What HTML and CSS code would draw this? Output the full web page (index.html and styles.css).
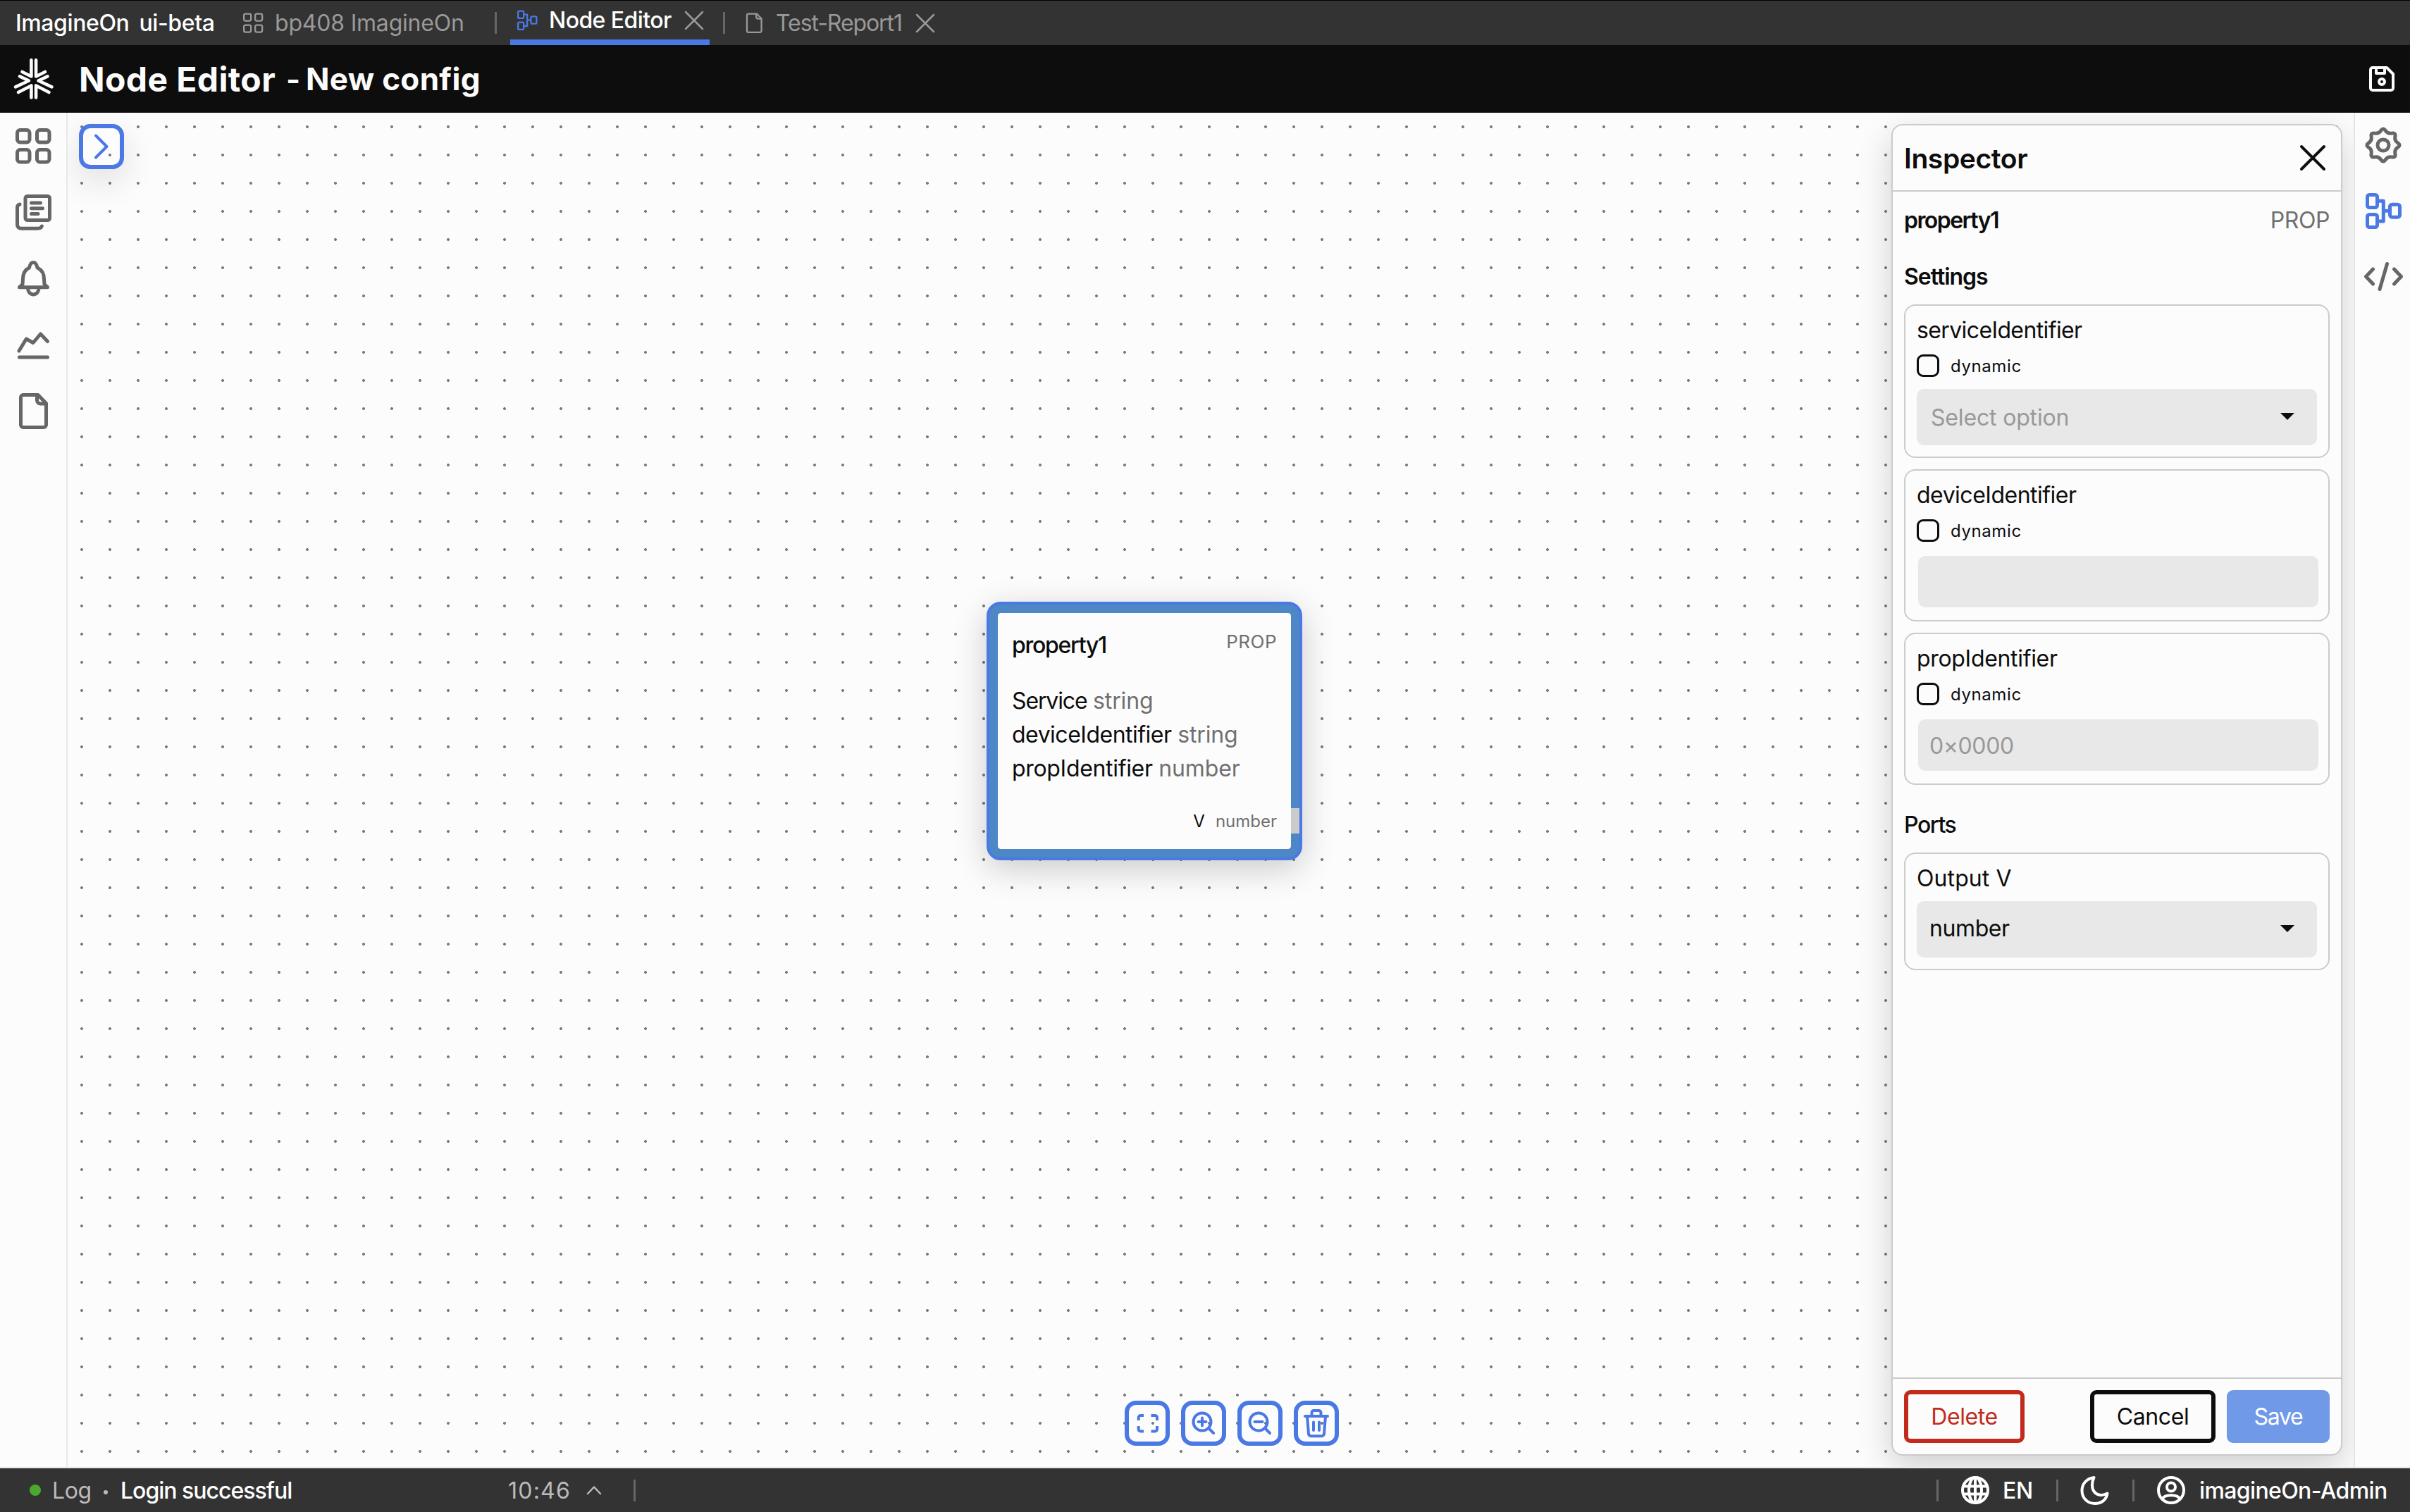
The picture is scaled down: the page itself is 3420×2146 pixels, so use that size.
FILE: index.html
```html
<!DOCTYPE html>
<html lang="en">
<head>
  <meta charset="UTF-8" />
  <meta name="viewport" content="width=device-width, initial-scale=1" />
  <title>ImagineOn - Node Editor</title>
  <link rel="stylesheet" href="styles.css">
</head>
<body>

  <svg class="symbols" aria-hidden="true">
    <symbol id="i-grid" viewBox="0 0 56 56">
      <rect x="5.5" y="4.5" width="17.5" height="17.5" rx="4" />
      <rect x="33.5" y="4.5" width="17.5" height="17.5" rx="4" />
      <rect x="5.5" y="32.5" width="17.5" height="17.5" rx="4" />
      <rect x="33.5" y="32.5" width="17.5" height="17.5" rx="4" />
    </symbol>
    <symbol id="i-nodes" viewBox="0 0 56 56">
      <rect x="5.5" y="4.5" width="14" height="18" rx="3" />
      <rect x="5.5" y="32.5" width="14" height="18" rx="3" />
      <rect x="37.5" y="18.2" width="14" height="18" rx="3" />
      <path d="M20 13.3h8.3V42H20M28.3 27.3h9" />
    </symbol>
    <symbol id="i-file" viewBox="0 0 56 56">
      <path d="M14 4.5h21L46.5 16.5v30.5a3.5 3.5 0 0 1-3.5 3.5H14a3.5 3.5 0 0 1-3.5-3.5V8a3.5 3.5 0 0 1 3.5-3.5z" />
      <path d="M33.5 5.5v6.5a5 5 0 0 0 5 5h7.5" />
    </symbol>
    <symbol id="i-close" viewBox="0 0 32 32">
      <path d="M4 4L28 28M28 4L4 28" />
    </symbol>
  </svg>

  <nav class="topbar">
    <div class="brand">
      <span class="brand-name">ImagineOn</span>
      <span class="brand-env">ui-beta</span>
    </div>
    <div class="tab tab-project">
      <svg class="icon tab-icon"><use href="#i-grid" /></svg>
      <span class="tab-label">bp408 ImagineOn</span>
    </div>
    <span class="sep"></span>
    <div class="tab tab-active">
      <svg class="icon tab-icon"><use href="#i-nodes" /></svg>
      <span class="tab-label">Node Editor</span>
      <svg class="icon tab-close"><use href="#i-close" /></svg>
    </div>
    <span class="sep sep-tab"></span>
    <div class="tab tab-report">
      <svg class="icon tab-icon"><use href="#i-file" /></svg>
      <span class="tab-label">Test-Report1</span>
      <svg class="icon tab-close"><use href="#i-close" /></svg>
    </div>
  </nav>

  <header class="header">
    <svg class="icon logo" viewBox="0 0 64 64">
      <g id="logo-half">
        <path d="M28.4 5.2V28.5L15.5 22" />
        <path d="M12 28.3L25 34.5L6 43.3" />
        <path d="M10 51L28.4 41.5V58.5" />
      </g>
      <use href="#logo-half" transform="translate(63.5 0) scale(-1 1)" />
    </svg>
    <h1 class="title">Node Editor</h1>
    <span class="title-dash">-</span>
    <h2 class="subtitle">New config</h2>
    <svg class="icon header-save" viewBox="0 0 40 40">
      <path d="M7 4H27L36 13V33a3 3 0 0 1-3 3H7a3 3 0 0 1-3-3V7a3 3 0 0 1 3-3z" />
      <path d="M12 4v8h12V4" />
      <circle cx="20" cy="24" r="4" />
    </svg>
  </header>

  <main class="workspace">
    <aside class="rail rail-left">
      <svg class="icon"><use href="#i-grid" /></svg>
      <svg class="icon" viewBox="0 0 56 56">
        <rect x="17" y="4.5" width="34.5" height="34" rx="3" />
        <path d="M25.5 14H38.5M25.5 21.7H41.5M25.5 29.5H35" />
        <path d="M9 16C6.5 16.5 5.5 18 5.5 21V45a5.3 5.3 0 0 0 5.3 5.3H34C37.5 50.3 39.8 49 40.3 47" />
      </svg>
      <svg class="icon" viewBox="0 0 56 56">
        <path d="M8.5 39.7L13 35.5L13.5 28C13.5 19.5 17 14.5 22.5 12C23.5 7 25.5 4.5 28.3 4.5S33 7 34 12C39.5 14.5 43.5 19.5 43.5 28L44 35.5L48.5 39.7Z" />
        <path d="M20.5 41a7.8 9 0 0 0 15.6 0" />
      </svg>
      <svg class="icon" viewBox="0 0 56 56">
        <path d="M8 36L18.3 19L28 24.5L38.5 12L48.5 22.5M8.5 45H48.5" />
      </svg>
      <svg class="icon"><use href="#i-file" /></svg>
    </aside>

    <section class="canvas">
      <button class="tool expand">
        <svg class="icon expand-icon" viewBox="0 0 52 52"><path d="M18 10.5L33.5 26L18 41.5" /></svg>
      </button>

      <article class="node">
        <div class="node-frame">
          <div class="node-head">
            <span class="node-name">property1</span>
            <span class="node-type">PROP</span>
          </div>
          <ul class="node-fields">
            <li><span class="f-service">Service</span> <em>string</em></li>
            <li><span class="f-device">deviceIdentifier</span> <em>string</em></li>
            <li><span class="f-prop">propIdentifier</span> <em>number</em></li>
          </ul>
          <div class="node-port">
            <span>V</span><em>number</em>
            <i class="port"></i>
          </div>
        </div>
      </article>

      <div class="toolbar">
        <button class="tool">
          <svg class="icon" viewBox="0 0 52 52"><path class="flat" d="M13.7 22v-4a3 3 0 0 1 3-3h4.3M31.5 15h5.5a3 3 0 0 1 3 3v4M40 30v4.5a3 3 0 0 1-3 3h-5.5M21 37.5h-4.3a3 3 0 0 1-3-3V30" /></svg>
        </button>
        <button class="tool">
          <svg class="icon" viewBox="0 0 52 52"><circle cx="24" cy="24" r="12.5" /><path d="M33.5 33.5L40 40M18.5 24h11M24 18.5v11" /></svg>
        </button>
        <button class="tool">
          <svg class="icon" viewBox="0 0 52 52"><circle cx="24" cy="24" r="12.5" /><path d="M33.5 33.5L40 40M18.5 24h11" /></svg>
        </button>
        <button class="tool">
          <svg class="icon" viewBox="0 0 52 52"><path d="M10 16H42M19.5 15.5V11a3 3 0 0 1 3-3h7a3 3 0 0 1 3 3v4.5M13 16L15 41a3.5 3.5 0 0 0 3.5 3.2h15A3.5 3.5 0 0 0 37 41L39 16M22 24.5V36M30 24.5V36" /></svg>
        </button>
      </div>

      <aside class="inspector">
        <div class="inspector-head">
          <span class="inspector-title">Inspector</span>
          <svg class="icon inspector-close" viewBox="0 0 40 40"><path d="M4 4L36 36M36 4L4 36" /></svg>
        </div>

        <div class="inspector-body">
          <div class="row">
            <span class="prop-name">property1</span>
            <span class="prop-type">PROP</span>
          </div>
          <h3 class="section section-settings">Settings</h3>
          <div class="cards">
            <div class="card">
              <span class="card-label l-service">serviceIdentifier</span>
              <label class="check"><input type="checkbox"><span>dynamic</span></label>
              <div class="select empty">Select option<i class="arrow"></i></div>
            </div>
            <div class="card">
              <span class="card-label">deviceIdentifier</span>
              <label class="check"><input type="checkbox"><span>dynamic</span></label>
              <input class="field" type="text">
            </div>
            <div class="card">
              <span class="card-label l-prop">propIdentifier</span>
              <label class="check"><input type="checkbox"><span>dynamic</span></label>
              <input class="field" type="text" placeholder="0×0000">
            </div>
          </div>
          <h3 class="section section-ports">Ports</h3>
          <div class="card">
            <span class="card-label l-output">Output V</span>
            <div class="select output">number<i class="arrow"></i></div>
          </div>
        </div>

        <div class="inspector-foot">
          <button class="btn btn-delete">Delete</button>
          <button class="btn btn-cancel">Cancel</button>
          <button class="btn btn-save">Save</button>
        </div>
      </aside>
    </section>

    <aside class="rail rail-right">
      <svg class="icon" viewBox="0 0 56 56">
        <path d="M48.6 24.8Q53.5 28 48.6 31.2Q43.7 34.5 44.9 40.2Q46 46 40.2 44.9Q34.5 43.7 31.2 48.6Q28 53.5 24.8 48.6Q21.5 43.7 15.8 44.9Q10 46 11.1 40.2Q12.3 34.5 7.4 31.2Q2.5 28 7.4 24.8Q12.3 21.5 11.1 15.8Q10 10 15.8 11.1Q21.5 12.3 24.8 7.4Q28 2.5 31.2 7.4Q34.5 12.3 40.2 11.1Q46 10 44.9 15.8Q43.7 21.5 48.6 24.8Z" />
        <circle cx="28" cy="28" r="8" />
      </svg>
      <svg class="icon selected"><use href="#i-nodes" /></svg>
      <svg class="icon" viewBox="0 0 56 56">
        <path d="M13.5 16L3.5 26.5L13.5 37M33.5 8.5L23 44.5M43.5 16L53.5 26.5L43.5 37" />
      </svg>
    </aside>
  </main>

  <footer class="statusbar">
    <div class="status">
      <i class="led"></i>
      <span class="log">Log</span>
      <i class="bullet"></i>
      <span class="message">Login successful</span>
    </div>
    <span class="time">10:46</span>
    <svg class="icon caret" viewBox="0 0 24 24"><path d="M3 17L12 7.5L21 17" /></svg>
    <span class="sep sep-log"></span>

    <div class="session">
      <span class="sep"></span>
      <div class="lang">
        <svg class="icon" viewBox="0 0 44 44">
          <circle cx="22" cy="22" r="18" />
          <ellipse cx="22" cy="22" rx="9" ry="18" />
          <path d="M22 4V40M5 16.5H39M5 27.5H39" />
        </svg>
        <span>EN</span>
      </div>
      <span class="sep"></span>
      <div class="theme">
        <svg class="icon" viewBox="0 0 44 44">
          <path d="M21.5 4C11 5.5 4.5 13 4.5 22.5C4.5 33.5 12.5 41 23 41C32 41 39.5 35.5 40.5 26.5C37 28.5 34 29.3 31 29C23.5 28.5 19 22.5 19 15C19 10.5 20 7 21.5 4Z" />
        </svg>
      </div>
      <span class="sep"></span>
      <div class="user">
        <svg class="icon" viewBox="0 0 44 44">
          <circle cx="22" cy="22" r="18" />
          <circle cx="22" cy="17.5" r="6" />
          <path d="M9.5 34.5C13 27.5 31 27.5 34.5 34.5" />
        </svg>
        <span>imagineOn-Admin</span>
      </div>
    </div>
  </footer>

</body>
</html>
```
FILE: styles.css
```css
:root {
  --blue: #4a78e4;
  --ink: #0d0d0d;
  --paper: #fcfcfc;
  --bar: #333;
  --line: #cbcbcb;
  --muted: #707070;
  --field: #e8e8e8;
}
* {
  box-sizing: border-box;
}
html, body {
  margin: 0;
  padding: 0;
  height: 100%;
}
body {
  display: flex;
  flex-direction: column;
  background: var(--paper);
  color: var(--ink);
  font-family: Inter, "Noto Sans", sans-serif;
  font-size: 32px;
  letter-spacing: -0.4px;
  white-space: nowrap;
  overflow: hidden;
}
h1, h2, h3, ul {
  margin: 0;
  padding: 0;
  list-style: none;
}
em, i {
  font-style: normal;
}
button, input {
  font: inherit;
  letter-spacing: inherit;
  color: inherit;
  margin: 0;
}
.symbols {
  display: none;
}
.icon {
  flex: none;
  display: block;
  fill: none;
  stroke: currentColor;
  stroke-linecap: round;
  stroke-linejoin: round;
}
.sep {
  flex: none;
  width: 3px;
  height: 31px;
  background: #666;
}

/* Top tabs */
.topbar {
  display: flex;
  align-items: center;
  flex: none;
  height: 64px;
  padding-left: 22px;
  background: var(--bar);
  border-top: 1px solid #000;
  color: #999;
}
.brand {
  display: flex;
  width: 321px;
  gap: 14px;
  color: #fff;
  font-weight: 500;
}
.tab {
  display: flex;
  align-items: center;
  height: 63px;
}
.tab-icon {
  width: 32px;
  height: 32px;
  margin-right: 15px;
  stroke-width: 4px;
}
.tab-close {
  width: 32px;
  height: 32px;
  stroke-width: 2.5px;
}
.tab-project {
  width: 359px;
}
.tab-project .tab-label {
  letter-spacing: -0.2px;
}
.tab-active {
  width: 283px;
  margin-left: 19px;
  padding-left: 8px;
  border-bottom: 8px solid var(--blue);
  color: #fff;
}
.tab-active .tab-label {
  width: 190px;
  font-weight: 500;
  letter-spacing: -0.57px;
}
.tab-active .tab-icon {
  color: var(--blue);
}
.tab-active .tab-close {
  color: #999;
}
.sep-tab {
  margin-left: 19px;
}
.tab-report {
  margin-left: 25px;
}
.tab-report .tab-label {
  width: 196px;
  letter-spacing: -1.08px;
}

/* Page header */
.header {
  display: flex;
  align-items: center;
  flex: none;
  height: 96px;
  padding: 0 20px 0 16px;
  background: var(--ink);
  color: var(--paper);
}
.logo {
  width: 64px;
  height: 64px;
  stroke-width: 4.6px;
}
.title {
  width: 282px;
  margin-left: 32px;
  font-size: 48px;
  font-weight: 700;
  letter-spacing: 0.4px;
}
.title-dash {
  width: 40px;
  padding-left: 12px;
  font-size: 43px;
  font-weight: 700;
}
.subtitle {
  padding-bottom: 1px;
  font-size: 44px;
  font-weight: 700;
  letter-spacing: 0.3px;
}
.header-save {
  width: 40px;
  height: 40px;
  margin-left: auto;
  stroke-width: 4px;
}

/* Side rails */
.workspace {
  display: flex;
  flex: 1;
  min-height: 0;
}
.rail {
  display: flex;
  flex-direction: column;
  gap: 38px;
  flex: none;
  color: #666;
}
.rail .icon {
  width: 56px;
  height: 56px;
  stroke-width: 5px;
}
.rail .selected {
  color: var(--blue);
}
.rail-left {
  width: 96px;
  padding: 20px 0 0 19px;
  border-right: 2px solid var(--field);
}
.rail-right {
  width: 80px;
  padding: 18px 0 0 12px;
  border-left: 2px solid #e4e4e4;
}

/* Node canvas */
.canvas {
  position: relative;
  flex: 1;
  overflow: hidden;
  background: radial-gradient(circle at 20px 20px, #7d7c84 1.6px, transparent 2.3px) 0 0 / 40px 40px;
}
.tool {
  width: 64px;
  height: 64px;
  padding: 0;
  border: 6px solid var(--blue);
  border-radius: 16px;
  background: none;
  color: var(--blue);
}
.tool .icon {
  width: 52px;
  height: 52px;
  stroke-width: 4px;
}
.tool .flat {
  stroke-linecap: butt;
}
.expand {
  position: absolute;
  left: 16px;
  top: 16px;
  box-shadow: 0 16px 48px rgba(0, 0, 0, 0.12);
}
.toolbar {
  position: absolute;
  left: 1500px;
  bottom: 30px;
  display: flex;
  gap: 16px;
}
.node {
  position: absolute;
  left: 1304px;
  top: 694px;
  width: 448px;
  height: 367px;
  border: 4px solid var(--blue);
  border-radius: 20px;
  background: #4d87c5;
  box-shadow: 0 12px 48px rgba(0, 0, 0, 0.2);
}
.node-frame {
  height: 100%;
  padding: 26px 20px 0;
  border: 12px solid #4d87c5;
  border-radius: 16px;
  background: var(--paper);
  background-clip: padding-box;
}
.node em {
  color: var(--muted);
}
.node-head {
  display: flex;
  justify-content: space-between;
  line-height: 40px;
}
.node-name {
  font-weight: 500;
  letter-spacing: -1.29px;
}
.node-type {
  font-size: 26px;
  line-height: 30px;
  letter-spacing: 0.5px;
  color: var(--muted);
}
.node-fields {
  margin-top: 35px;
  line-height: 48px;
}
.node-fields .f-service {
  letter-spacing: -1.13px;
}
.node-fields .f-device {
  letter-spacing: -0.5px;
}
.node-fields .f-prop {
  letter-spacing: -0.32px;
}
.node-fields em {
  letter-spacing: -0.15px;
}
.node-port {
  position: relative;
  display: flex;
  justify-content: flex-end;
  gap: 15px;
  margin-top: 33px;
  font-size: 24px;
  line-height: 36px;
  letter-spacing: 0;
}
.port {
  position: absolute;
  right: -32px;
  top: -1px;
  width: 12px;
  height: 36px;
  background: #cbcbcb;
}

/* Inspector */
.inspector {
  position: absolute;
  top: 16px;
  right: 16px;
  bottom: 16px;
  width: 640px;
  display: flex;
  flex-direction: column;
  border: 2px solid var(--line);
  border-radius: 16px;
  background: var(--paper);
  box-shadow: 0 16px 48px rgba(0, 0, 0, 0.18);
}
.inspector-head {
  display: flex;
  align-items: center;
  justify-content: space-between;
  height: 94px;
  padding: 0 20px 0 16px;
  border-bottom: 2px solid var(--line);
}
.inspector-title {
  padding-top: 1px;
  font-size: 39px;
  font-weight: 600;
}
.inspector-close {
  width: 40px;
  height: 40px;
  stroke-width: 4px;
}
.inspector-body {
  flex: 1;
  padding: 0 16px;
}
.row {
  display: flex;
  justify-content: space-between;
  height: 80px;
  line-height: 82px;
}
.prop-name {
  font-weight: 600;
  letter-spacing: -1.55px;
}
.prop-type {
  color: var(--muted);
}
.section {
  height: 80px;
  font-size: 32px;
  line-height: 82px;
}
.section-settings {
  font-weight: 600;
  letter-spacing: -1.04px;
}
.section-ports {
  margin-top: 16px;
  font-weight: 500;
  letter-spacing: -1.4px;
}
.cards {
  display: flex;
  flex-direction: column;
  gap: 16px;
}
.card {
  display: flex;
  flex-direction: column;
  padding: 16px;
  border: 2px solid var(--line);
  border-radius: 16px;
}
.card-label {
  margin-bottom: 16px;
  line-height: 37px;
  letter-spacing: -0.5px;
}
.l-service {
  letter-spacing: -0.62px;
}
.l-prop {
  letter-spacing: -0.32px;
}
.l-output {
  margin-bottom: 14px;
  letter-spacing: 0.1px;
}
.check {
  display: flex;
  gap: 16px;
  height: 49px;
  font-size: 24px;
  line-height: 34px;
  letter-spacing: 0.6px;
}
.check input {
  appearance: none;
  width: 32px;
  height: 32px;
  border: 3px solid var(--ink);
  border-radius: 9px;
}
.select {
  display: flex;
  align-items: center;
  justify-content: space-between;
  width: 568px;
  height: 80px;
  padding: 0 32px 0 18px;
  border-radius: 10px;
  background: var(--field);
}
.select.empty {
  padding-left: 20px;
  color: #999;
  letter-spacing: -0.17px;
}
.select.output {
  padding-bottom: 3px;
}
.arrow {
  margin-top: -3px;
  border: 10px solid transparent;
  border-top-color: var(--ink);
  border-bottom: 0;
}
.output .arrow {
  margin-top: 0;
}
.field {
  width: 568px;
  height: 73px;
  margin: 3px 0 2px 2px;
  padding: 2px 16px 0;
  border: 0;
  border-radius: 10px;
  background: var(--field);
}
.field::placeholder {
  color: #999;
  opacity: 1;
}
.inspector-foot {
  display: flex;
  gap: 16px;
  padding: 16px;
  border-top: 2px solid var(--line);
}
.btn {
  height: 75px;
  padding: 0;
  border: 6px solid;
  border-radius: 9px;
  background: none;
}
.btn-delete {
  width: 171px;
  margin-right: auto;
  color: #c22a1c;
}
.btn-cancel {
  width: 178px;
}
.btn-save {
  width: 146px;
  border: 0;
  background: #7099e8;
  color: #fff;
  letter-spacing: -1.3px;
}

/* Status bar */
.statusbar {
  display: flex;
  align-items: center;
  flex: none;
  height: 64px;
  border-top: 2px solid var(--field);
  background: var(--bar);
  color: #bbb;
}
.status {
  display: flex;
  align-items: center;
  width: 721px;
  padding-left: 42px;
}
.led {
  width: 16px;
  height: 16px;
  margin-right: 16px;
  border-radius: 50%;
  background: #4ca82f;
}
.log {
  width: 73px;
}
.bullet {
  width: 6px;
  height: 6px;
  margin: 6px 18px 0 0;
  border-radius: 50%;
  background: #bbb;
}
.message {
  color: #fff;
  font-weight: 500;
  letter-spacing: -1px;
}
.time {
  width: 110px;
  letter-spacing: 1.23px;
}
.caret {
  width: 24px;
  height: 24px;
  stroke-width: 2.5px;
}
.sep-log {
  margin-left: 44px;
}
.session {
  display: flex;
  align-items: center;
  margin-left: auto;
  color: #fff;
}
.session .icon {
  width: 44px;
  height: 44px;
  stroke-width: 4px;
}
.lang, .theme, .user {
  display: flex;
  align-items: center;
  padding-left: 30px;
}
.lang {
  width: 167px;
  gap: 17px;
  font-weight: 500;
}
.theme {
  width: 105px;
  padding-left: 29px;
}
.user {
  width: 391px;
  gap: 18px;
  font-weight: 500;
  letter-spacing: -0.63px;
}
```
